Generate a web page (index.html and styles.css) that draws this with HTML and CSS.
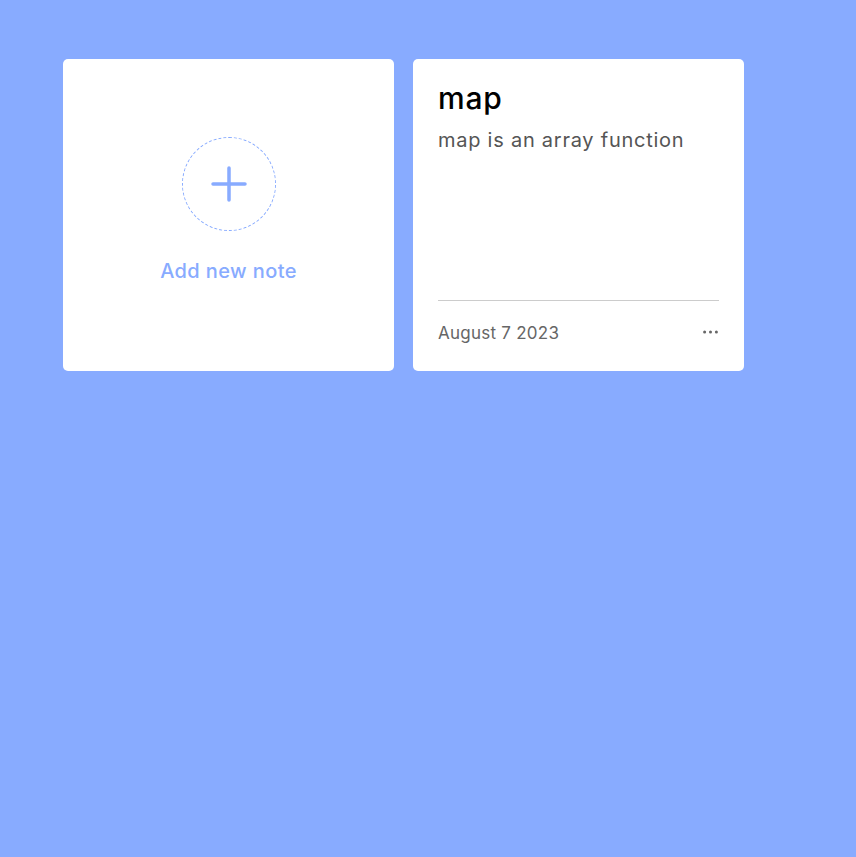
FILE: index.html
```html
<!DOCTYPE html>
<html>
<head>
<meta charset="utf-8">
<link rel="stylesheet" href="styles.css">
</head>
<body>
<div class="notes">
  <div class="card add-card">
    <div class="add-circle">
      <svg width="40" height="40" viewBox="0 0 40 40"><path d="M20 4V36M4 20H36" stroke="#88abff" stroke-width="3.5" stroke-linecap="round" fill="none"/></svg>
    </div>
    <p class="add-label">Add new note</p>
  </div>
  <div class="card note">
    <div class="note-body">
      <p class="note-title">map</p>
      <p class="note-desc">map is an array function</p>
    </div>
    <div class="note-footer">
      <span class="note-date">August 7 2023</span>
      <svg class="note-menu" width="15" height="4" viewBox="0 0 15 4"><circle cx="1.6" cy="2" r="1.5" fill="#666"/><circle cx="7.5" cy="2" r="1.5" fill="#666"/><circle cx="13.4" cy="2" r="1.5" fill="#666"/></svg>
    </div>
  </div>
</div>
</body>
</html>
```
FILE: styles.css
```css
* { box-sizing: border-box; }
html, body { margin: 0; padding: 0; }
body {
  background: #88abff;
  font-family: Inter, "Open Sans", sans-serif;
  min-height: 857px;
}
.notes {
  display: grid;
  grid-template-columns: repeat(2, 331px);
  gap: 19px;
  padding: 59px 0 0 63px;
}
.card {
  background: #fff;
  border-radius: 5px;
  height: 312px;
}
.add-card {
  display: flex;
  flex-direction: column;
  align-items: center;
  padding-top: 78px;
}
.add-circle {
  width: 94px;
  height: 94px;
  border: 1px dashed #88abff;
  border-radius: 50%;
  display: flex;
  align-items: center;
  justify-content: center;
}
.add-label {
  margin: 28px 0 0;
  color: #88abff;
  font-size: 20px;
  font-weight: 500;
  letter-spacing: 0.4px;
}
.note {
  display: flex;
  flex-direction: column;
  padding: 21px 25px 0;
}
.note-body { flex: 1; }
.note-title {
  margin: 0;
  font-size: 30px;
  font-weight: 500;
  color: #000;
  letter-spacing: 0.8px;
}
.note-desc {
  margin: 12px 0 0;
  font-size: 20px;
  color: #555;
  letter-spacing: 0.75px;
}
.note-footer {
  border-top: 1px solid #ccc;
  height: 71px;
  display: flex;
  justify-content: space-between;
  align-items: flex-start;
  padding-top: 22px;
}
.note-date {
  font-size: 17px;
  color: #666;
  letter-spacing: 0.25px;
}
.note-menu {
  margin-top: 7px;
  margin-right: 1px;
}
```
